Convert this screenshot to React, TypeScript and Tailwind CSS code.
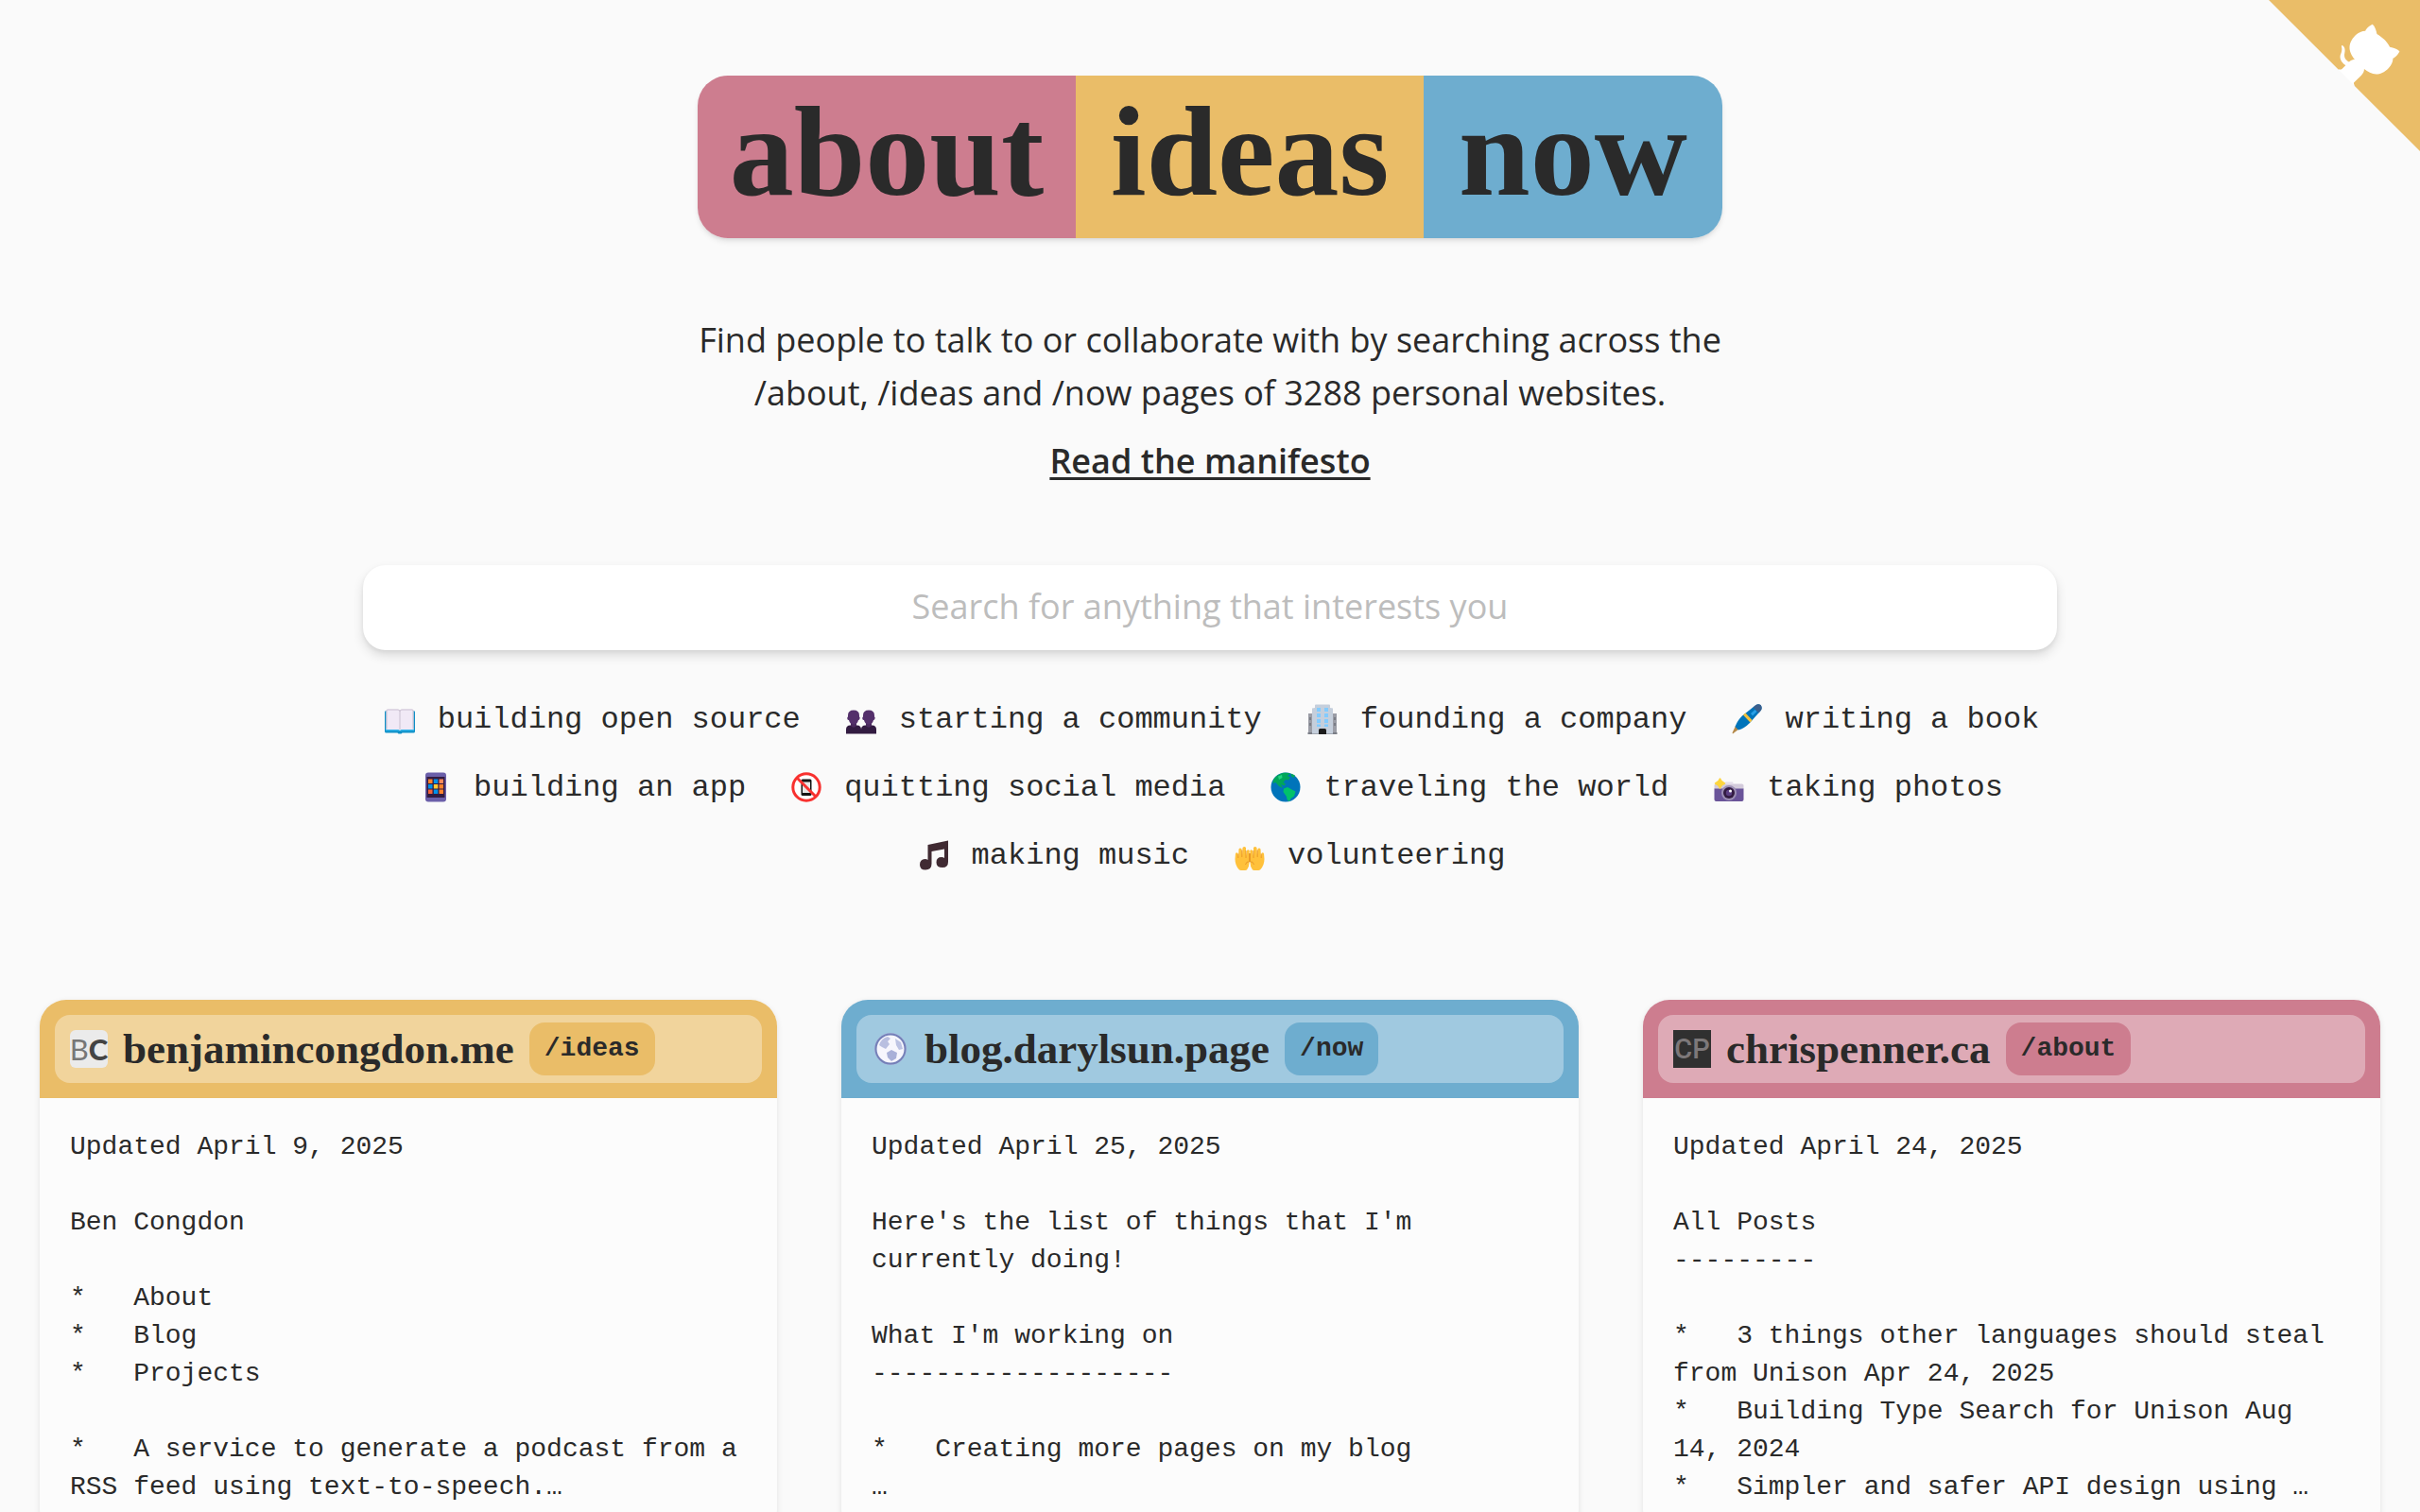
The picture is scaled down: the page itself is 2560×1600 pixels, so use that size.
import type { ReactNode } from "react";

function Emoji({ children }: { children: ReactNode }) {
  return (
    <span className="flex w-10 shrink-0 justify-center pb-0.5">
      <svg viewBox="0 0 32 32" className="size-8" aria-hidden="true">
        {children}
      </svg>
    </span>
  );
}

const bookIcon = (
  <Emoji>
    <path d="M0 8.5Q0 7 1.5 7H30.500Q32 7 32 8.500V29Q32 30.500 30.500 30.500H18.500L17.500 31.500H14.500L13.500 30.500H1.500Q0 30.500 0 29Z" fill="#0f8fc6" />
    <path d="M1 26H31V28.500H1Z" fill="#35b5ea" />
    <path d="M1.500 7Q1.500 5.500 3 5.500H14Q16 5.500 16 7Q16 5.500 18 5.500H29Q30.500 5.500 30.500 7V27H17.500L16 28L14.500 27H1.500Z" fill="#f1e9f6" />
    <path d="M2 26.500V7Q2 6 3 6H14Q16 6 16 8Q16 6 18 6H29Q30 6 30 7V26.500M16 8V27" fill="none" stroke="#c9bfd0" strokeWidth="1" />
  </Emoji>
);

const peopleIcon = (
  <Emoji>
    {[0, 16].map((x) => (
      <g key={x} transform={`translate(${x} 0)`}>
        <path d="M0 31.500V27Q0 22.500 4.500 22.500H11.500Q16 22.500 16 27V31.500Z" fill="#321b41" />
        <path d="M5 18H11V23Q8 26.500 5 23Z" fill="#4a2a5e" />
        <path d="M2 12Q2 6.500 8 6.500T14 12V13.500Q15 14 14.500 15.500T13 17Q12 21.500 8 21.500T3 17Q1.500 17 1.300 15.500T2 13.500Z" fill="#54306b" />
      </g>
    ))}
  </Emoji>
);

const officeIcon = (
  <Emoji>
    <path d="M1 10H6V31.500H1ZM26 10H31V31.500H26Z" fill="#9b9da6" />
    <path d="M0.500 30H31.500V32H0.500Z" fill="#7a7d86" />
    <path d="M5 4.500L8 4V1.500Q8 0.500 9 0.500H23Q24 0.500 24 1.500V4L27 4.500V31.500H5Z" fill="#c5cfdc" />
    <path d="M10 4H14V8H10ZM18 4H22V8H18ZM10 10H14V14H10ZM18 10H22V14H18ZM10 16H14V20H10ZM18 16H22V20H18ZM10 21.500H14V24H10ZM18 21.500H22V24H18Z" fill="#83cbff" />
    <path d="M2 14H4V17H2ZM2 20H4V23H2ZM28 14H30V17H28ZM28 20H30V23H28Z" fill="#7a7d86" />
    <path d="M12 32V27.500Q12 26 13.500 26H18.500Q20 26 20 27.500V32Z" fill="#1c1c1c" />
  </Emoji>
);

const penIcon = (
  <Emoji>
    <path d="M1 31.500L0.500 30.500L4 23L7.500 26.500Z" fill="#b4894a" />
    <path d="M3.500 24Q5.500 18 11 12.500L25.500 1Q28 -0.500 30.500 1Q32.500 3.500 31 6.500L19 20Q13 26 7 27.500Z" fill="#0074ba" />
    <path d="M25.500 1Q28 -0.500 30.500 1Q32.500 3.500 31 6.500L28.500 9.500L22.500 3.500Z" fill="#3c5f8c" />
    <path d="M12 11.600L14.500 9.600L21.500 17L19.500 19.500Z" fill="#f3c13d" />
    <path d="M24.500 6L26.500 8L22 12.500L20 10Z" fill="#2aa0e6" />
  </Emoji>
);

const phoneIcon = (
  <Emoji>
    <rect x="5" y="0.500" width="22" height="31" rx="3" fill="#6b5fa9" />
    <rect x="6.500" y="5" width="19" height="22" fill="#321b41" />
    <path d="M8 7.500H12.500V12H8ZM19.500 18.500H24V23H19.500ZM19.500 13H24V17.500H19.500Z" fill="#ff822d" />
    <path d="M13.800 7.500H18.300V12H13.800ZM8 13H12.500V17.500H8ZM13.800 18.500H18.300V23H13.800Z" fill="#0091ea" />
    <path d="M19.500 7.500H24V12H19.500Z" fill="#ff8a5c" />
    <path d="M13.800 13H18.300V17.500H13.800Z" fill="#ffc832" />
    <path d="M8 18.500H12.500V23H8Z" fill="#f4633a" />
  </Emoji>
);

const noPhoneIcon = (
  <Emoji>
    <circle cx="16" cy="16" r="14" fill="#fff" />
    <rect x="10.500" y="7.500" width="11" height="17.500" rx="1.500" fill="#141414" />
    <rect x="12" y="10.500" width="8" height="11.500" fill="#e6e6e6" />
    <circle cx="16" cy="16" r="14.200" fill="none" stroke="#f8312f" strokeWidth="3" />
    <path d="M6 6L26 26" stroke="#f8312f" strokeWidth="3" />
  </Emoji>
);

const earthIcon = (
  <Emoji>
    <circle cx="16" cy="16" r="15.500" fill="#0074ba" />
    <path d="M3 8Q7 2 14 0.800Q19 0.500 21 1.500L18 4L21 5.500L19 8.500L16 8L13.500 11L16 12.500L14.500 14.500L11 13L13 17L9 15L5.500 11L2.500 12Z" fill="#00a65a" />
    <path d="M14 17.500L18 16L22.500 18.500L26.500 20.500L25 25.500L21.500 28L20 31Q17 30 17 26L13.500 21Z" fill="#00c26b" />
    <path d="M21.500 1.500L26 3.500L24.500 6L22 4.500Z" fill="#00a65a" />
    <path d="M8 4.500L12 3L12.500 6L9 8Z" fill="#22d47f" />
  </Emoji>
);

const cameraIcon = (
  <Emoji>
    <path d="M0.500 14Q0.500 12.500 2.500 12.500H29.500Q31.500 12.500 31.500 14V18H0.500Z" fill="#d3cbdb" />
    <path d="M11 13L12.500 10.500H20L21 13Z" fill="#e4deea" />
    <path d="M0.500 17.500H31.500V29Q31.500 31 29.500 31H2.500Q0.500 31 0.500 29Z" fill="#6a5499" />
    <circle cx="16" cy="22" r="8" fill="#9c8fb4" />
    <circle cx="16" cy="22" r="6" fill="#321b41" />
    <circle cx="16" cy="22" r="3.200" fill="#5b3e82" />
    <circle cx="17.500" cy="20" r="1.500" fill="#fff" />
    <path d="M6.500 7Q7.500 10.500 11.500 12Q7.500 13.500 6.500 17Q5.500 13.500 1.500 12Q5.500 10.500 6.500 7Z" fill="#fcd53f" stroke="#fcd53f" strokeWidth="1.500" strokeLinejoin="round" />
  </Emoji>
);

const musicIcon = (
  <Emoji>
    <path d="M9.500 5L31 0.500V23Q31 29 25 29Q18.500 29 18.500 23.500T24 18Q26 18 27 19V9.500L13.500 12V25Q13.500 31.500 7 31.500Q1 31.500 1 26T6.500 20Q8.500 20 9.500 21Z" fill="#402a32" />
  </Emoji>
);

const handsIcon = (
  <Emoji>
    {["", "translate(32 0) scale(-1 1)"].map((t) => (
      <g key={t} transform={t}>
        <path d="M5 31.500Q0.500 27 0.500 20L1 14Q2.500 12.500 3.500 14L4 18L4.500 9.500Q6 7.500 7.500 9.500L8 16L8.500 8Q10.300 6 12 8L12 17L13 11Q14.500 9.500 15.700 11L15.500 24Q15.500 28 13 31.500Q9 33 5 31.500Z" fill="#ffc13b" />
        <path d="M3.800 19V14.500M7.800 18V10.500M12 19V11M15.500 14V23Q12.500 22 11.500 26" fill="none" stroke="#ea9a28" strokeWidth="1" />
      </g>
    ))}
  </Emoji>
);

const topics = [
  { icon: bookIcon, label: "building open source" },
  { icon: peopleIcon, label: "starting a community" },
  { icon: officeIcon, label: "founding a company" },
  { icon: penIcon, label: "writing a book" },
  { icon: phoneIcon, label: "building an app" },
  { icon: noPhoneIcon, label: "quitting social media" },
  { icon: earthIcon, label: "traveling the world" },
  { icon: cameraIcon, label: "taking photos" },
  { icon: musicIcon, label: "making music" },
  { icon: handsIcon, label: "volunteering" },
];

const initialsIcon = (
  <span className="flex size-10 shrink-0 items-center justify-center rounded-md bg-[#ebebeb] font-['Lato',sans-serif] text-[31px] leading-10 text-[#777]">
    B<b className="font-black text-[#444]">C</b>
  </span>
);

const globeIcon = (
  <svg viewBox="0 0 40 40" className="size-10 shrink-0" aria-hidden="true">
    <circle cx="20" cy="20" r="17" fill="#a9b4dc" />
    <circle cx="20" cy="20" r="15.500" fill="#f7f6fd" stroke="#7480b8" strokeWidth="2" />
    <path d="M8 16Q10 9 17 7L20 9L17 12L19 15L15 20L11 18Z" fill="#b9bfe0" />
    <path d="M16 24L21 21L27 24L26 30L21 33L17 29Z" fill="#a9b0d8" />
    <path d="M25 9L31 13L33 20L29 21L26 16Z" fill="#bdc3e3" />
  </svg>
);

const blockIcon = (
  <span className="flex size-10 shrink-0 items-center justify-center bg-[#303030] font-['Roboto',sans-serif] text-[29px] font-medium leading-10 text-[#7d787a]">
    CP
  </span>
);

const cards = [
  {
    site: "benjamincongdon.me",
    path: "/ideas",
    color: "bg-[#eabd68]",
    icon: initialsIcon,
    body: `Updated April 9, 2025

Ben Congdon

*   About
*   Blog
*   Projects

*   A service to generate a podcast from a RSS feed using text-to-speech.…`,
  },
  {
    site: "blog.darylsun.page",
    path: "/now",
    color: "bg-[#6eadcf]",
    icon: globeIcon,
    body: `Updated April 25, 2025

Here's the list of things that I'm currently doing!

What I'm working on
-------------------

*   Creating more pages on my blog
…`,
  },
  {
    site: "chrispenner.ca",
    path: "/about",
    color: "bg-[#cd7d8f]",
    icon: blockIcon,
    body: `Updated April 24, 2025

All Posts
---------

*   3 things other languages should steal from Unison Apr 24, 2025
*   Building Type Search for Unison Aug 14, 2024
*   Simpler and safer API design using …`,
  },
];

function GithubCorner() {
  return (
    <a href="#github" aria-label="View source on GitHub" className="absolute right-0 top-0">
      <svg viewBox="0 0 250 250" className="size-40 text-white" aria-hidden="true">
        <path d="M0,0 L115,115 L130,115 L142,142 L250,250 L250,0 Z" fill="#eabd68" />
        <path
          d="M128.3,109.0 C113.8,99.7 119.0,89.6 119.0,89.6 C122.0,82.7 120.5,78.6 120.5,78.6 C119.2,72.0 123.4,76.3 123.4,76.3 C127.3,80.9 125.5,87.3 125.5,87.3 C122.9,97.6 130.6,101.9 134.4,103.2"
          fill="currentColor"
        />
        <path
          d="M115.0,115.0 C114.9,115.1 118.7,116.5 119.8,115.4 L133.7,101.6 C136.9,99.2 139.9,98.4 142.2,98.6 C133.8,88.0 127.5,74.4 143.8,58.0 C148.5,53.4 154.0,51.2 159.7,51.0 C160.3,49.4 163.2,43.6 171.4,40.1 C171.4,40.1 176.1,42.5 178.8,56.2 C183.1,58.6 187.2,61.8 190.9,65.4 C194.5,69.0 197.7,73.2 200.1,77.6 C213.8,80.2 216.3,84.9 216.3,84.9 C212.7,93.1 206.9,96.0 205.4,96.6 C205.1,102.4 203.0,107.8 198.3,112.5 C181.9,128.9 168.3,122.5 157.7,114.1 C157.9,116.9 156.7,120.9 152.7,124.9 L141.0,136.5 C139.8,137.7 141.6,141.9 141.8,141.8 Z"
          fill="currentColor"
        />
      </svg>
    </a>
  );
}

export default function App() {
  return (
    <div className="relative min-h-screen bg-[#fafafa] px-[42px] py-20 text-[#2a2a2a]">
      <GithubCorner />

      <header className="flex flex-col items-center font-['Open_Sans',sans-serif] text-[36px] leading-[56px]">
        <h1 className="grid grid-cols-[400px_368px_316px] overflow-hidden rounded-[32px] text-center font-['Liberation_Serif',serif] text-[136px] font-bold leading-[160px] shadow-md">
          <span className="bg-[#cd7d8f] pb-3">about</span>
          <span className="bg-[#eabd68] pb-3">ideas</span>
          <span className="bg-[#6eadcf] pb-3">now</span>
        </h1>
        <p className="mt-20 max-w-[1100px] text-center">
          Find people to talk to or collaborate with by searching across the /about, /ideas and /now pages of 3288
          personal websites.
        </p>
        <a href="#manifesto" className="mt-4 font-semibold underline decoration-[3px] underline-offset-4">
          Read the manifesto
        </a>
      </header>

      <section className="mx-auto mt-[82px] max-w-[1792px]">
        <form role="search">
          <input
            type="text"
            aria-label="Search for anything that interests you"
            placeholder="Search for anything that interests you"
            className="block h-[90px] w-full rounded-3xl bg-white px-8 pb-1 text-center font-['Open_Sans',sans-serif] text-[36px] shadow-[0_6px_12px_rgba(0,0,0,0.12),0_2px_4px_rgba(0,0,0,0.06)] outline-none placeholder:text-[#bdbdbd]"
          />
        </form>
        <ul className="mt-[50px] flex flex-wrap justify-center gap-x-11 gap-y-6 font-['Liberation_Mono',monospace] text-[32px] leading-[48px]">
          {topics.map((topic) => (
            <li key={topic.label}>
              <button type="button" className="flex items-center gap-5">
                {topic.icon}
                {topic.label}
              </button>
            </li>
          ))}
        </ul>
      </section>

      <main className="mt-32 grid grid-cols-3 gap-[68px]">
        {cards.map((card) => (
          <article key={card.site} className="rounded-[28px] bg-[#fcfcfc] shadow-[0_2px_6px_rgba(0,0,0,0.1)]">
            <header className={`rounded-t-[28px] p-4 ${card.color}`}>
              <div className="flex h-[72px] items-center gap-4 rounded-2xl bg-white/35 px-4">
                {card.icon}
                <h2 className="font-['Liberation_Serif',serif] text-[45px] font-bold leading-[56px]">
                  <a href={`https://${card.site}`}>{card.site}</a>
                </h2>
                <span
                  className={`rounded-2xl px-4 py-2 font-['Liberation_Mono',monospace] text-[28px] font-bold leading-10 ${card.color}`}
                >
                  {card.path}
                </span>
              </div>
            </header>
            <p className="whitespace-pre-wrap p-8 font-['Liberation_Mono',monospace] text-[28px] leading-10">
              {card.body}
            </p>
          </article>
        ))}
      </main>
    </div>
  );
}
